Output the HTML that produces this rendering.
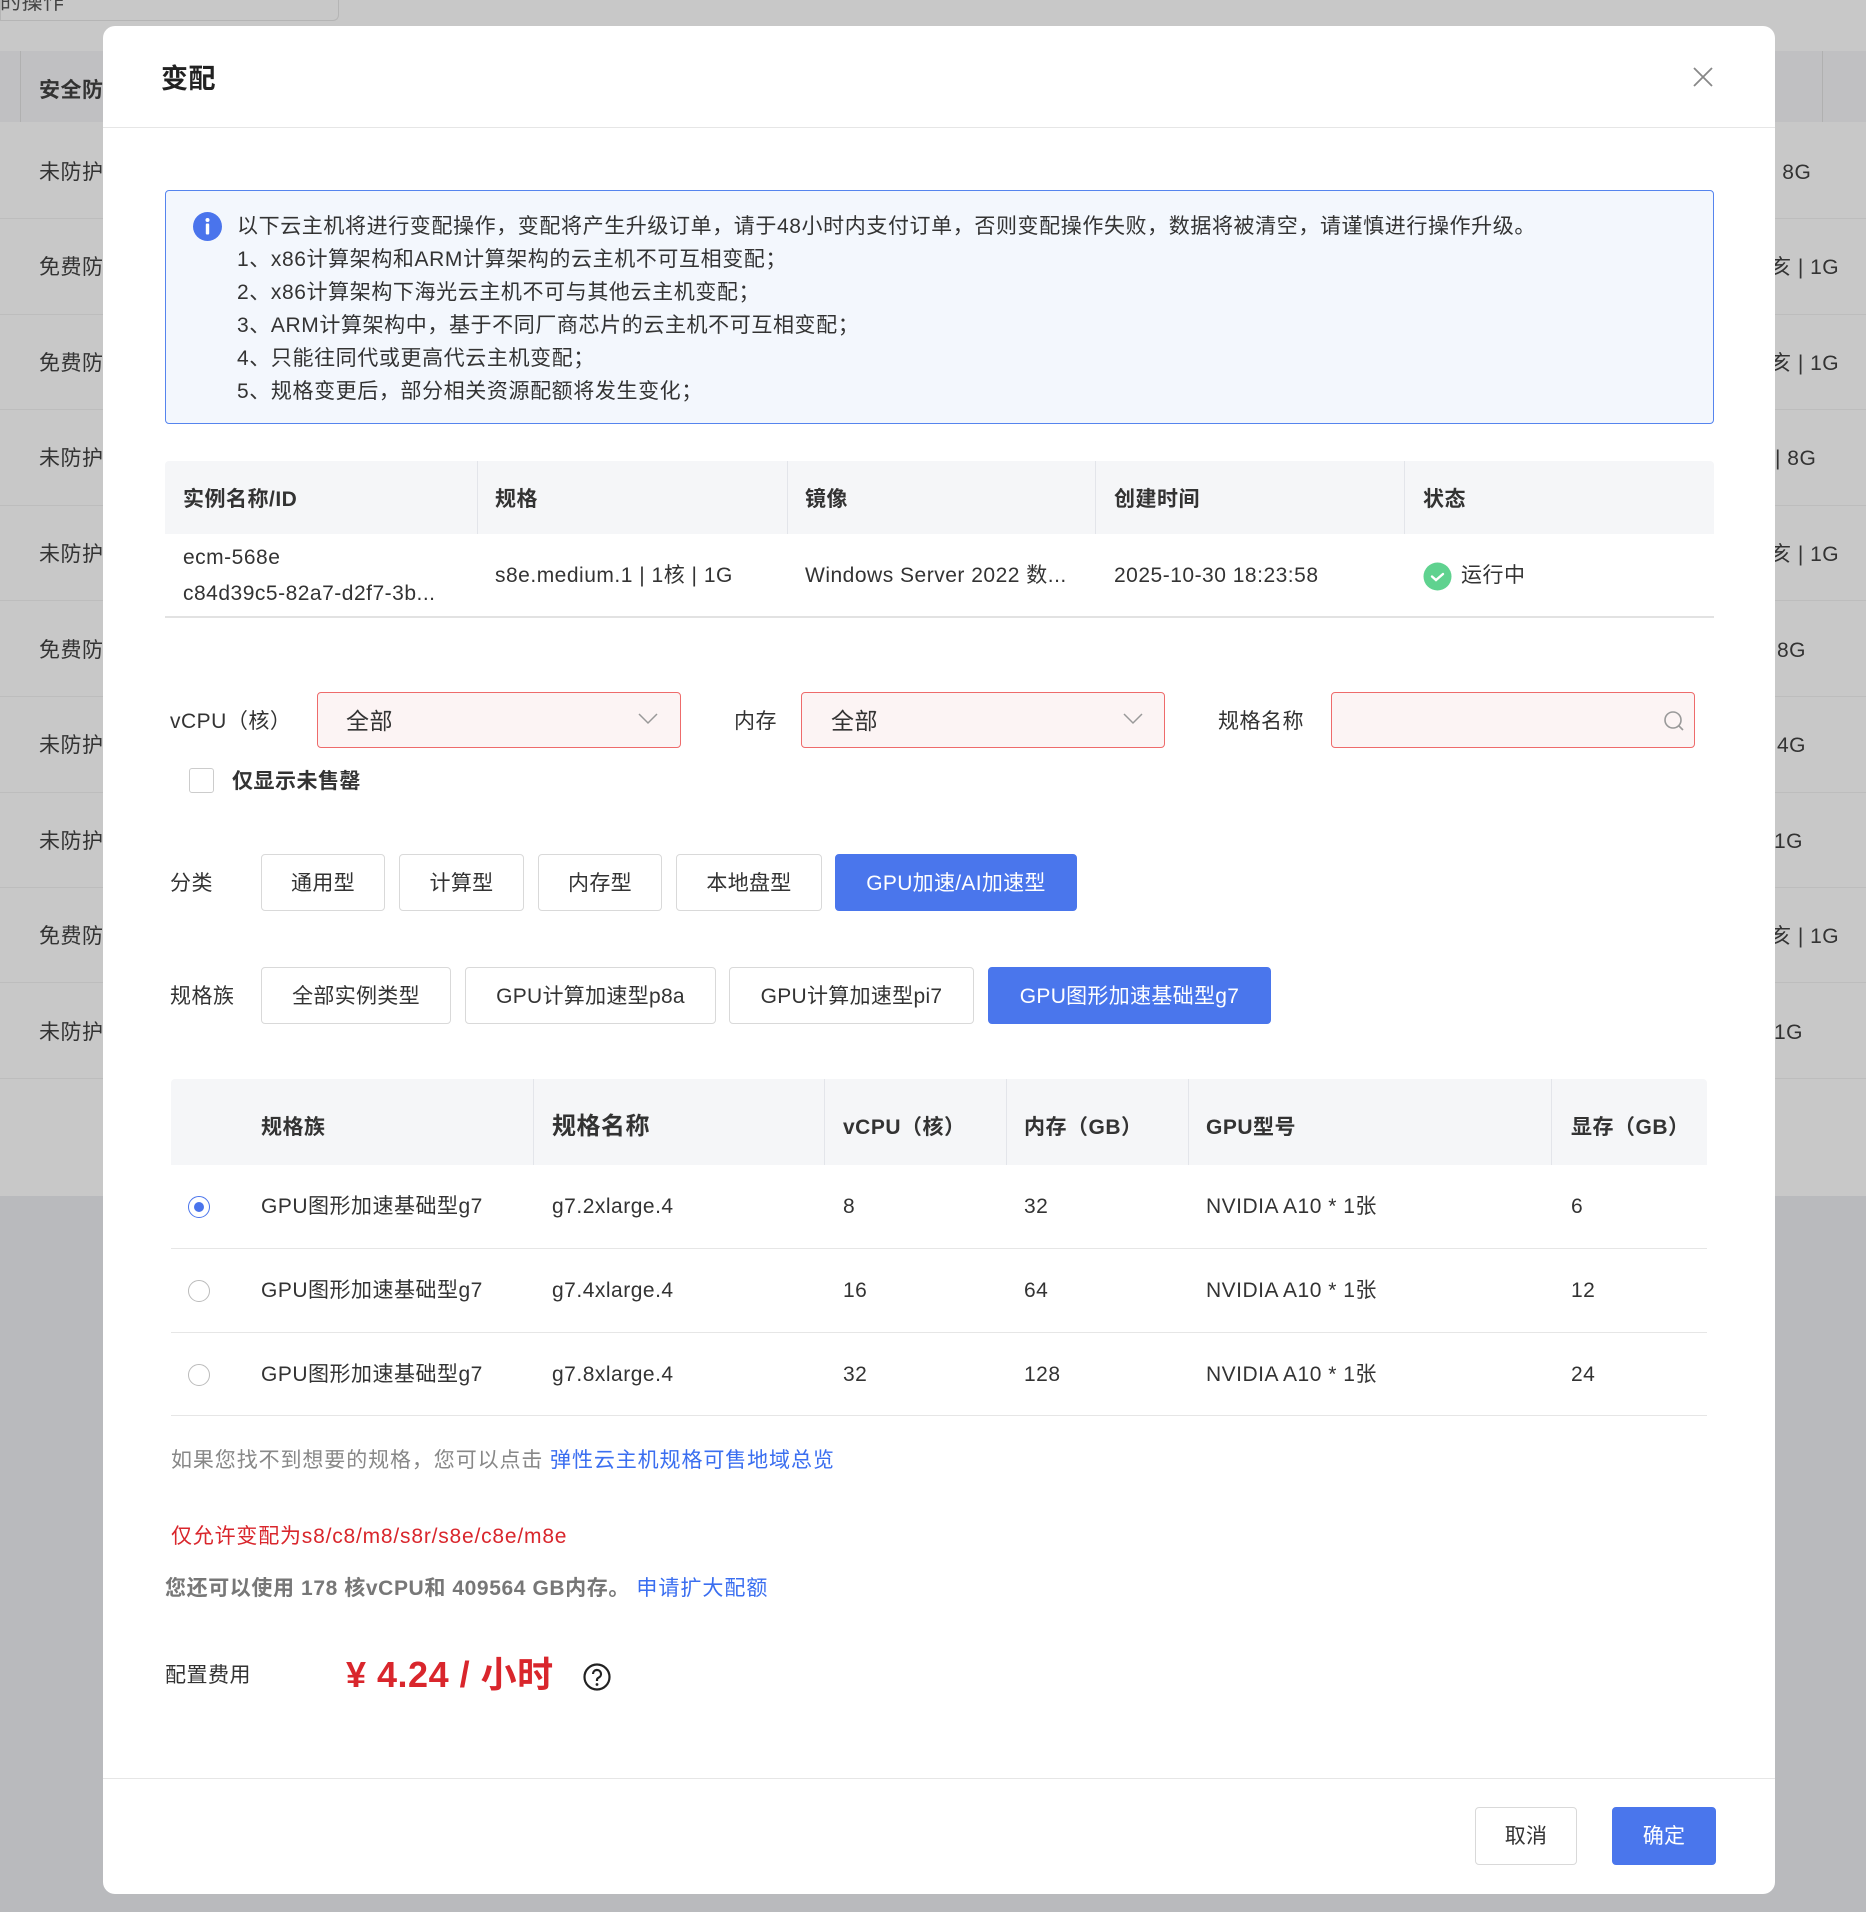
<!DOCTYPE html>
<html><head><meta charset="utf-8"><style>
*{margin:0;padding:0;box-sizing:border-box}
body{width:1866px;height:1912px;position:relative;overflow:hidden;background:#c8c8c8;font-family:"Liberation Sans","Noto Sans CJK SC",sans-serif;color:#333;font-size:21px;letter-spacing:0.5px}
.a{position:absolute;white-space:nowrap}
.c{line-height:33px;height:33px}
.bgrow{position:absolute;left:0;width:1866px;border-bottom:1px solid #bdbdbd}
.btn{position:absolute;border:1px solid #d9d9d9;border-radius:4px;background:#fff;text-align:center;color:#333;font-size:21px;letter-spacing:0.3px}
.blue{background:#4a76ec;border-color:#4a76ec;color:#fff}
.th{font-weight:bold}
.line{position:absolute;height:1px;background:#e6e6e6}
.vl{position:absolute;width:1px;background:#e3e5ea}
.radio{position:absolute;width:22px;height:22px;border:1px solid #bbb;border-radius:50%;background:#fff}
</style></head><body>
<div class="a" style="left:0;top:0;width:339px;height:21px;border:1px solid #b5b5b5;border-top:none;border-radius:0 0 6px 0"></div>
<div class="a" style="left:0;top:-14px;font-size:21px;color:#444">的操作</div>
<div class="a" style="left:0;top:51px;width:1866px;height:71px;background:#c0c0c2"></div>
<div class="a" style="left:20px;top:51px;width:1px;height:71px;background:#b0b0b0"></div>
<div class="a" style="left:1822px;top:51px;width:1px;height:71px;background:#b0b0b0"></div>
<div class="a c" style="left:39px;top:74px;font-weight:bold;color:#333">安全防</div>
<div class="a" style="left:0;top:1196px;width:1866px;height:716px;background:#b9babd"></div>
<div class="bgrow" style="top:122px;height:97px"></div>
<div class="bgrow" style="top:219px;height:96px"></div>
<div class="bgrow" style="top:315px;height:95px"></div>
<div class="bgrow" style="top:410px;height:96px"></div>
<div class="bgrow" style="top:506px;height:95px"></div>
<div class="bgrow" style="top:601px;height:96px"></div>
<div class="bgrow" style="top:697px;height:96px"></div>
<div class="bgrow" style="top:793px;height:95px"></div>
<div class="bgrow" style="top:888px;height:95px"></div>
<div class="bgrow" style="top:983px;height:96px"></div>
<div class="a c" style="left:39px;top:156px">未防护</div>
<div class="a c" style="left:39px;top:251px">免费防</div>
<div class="a c" style="left:39px;top:347px">免费防</div>
<div class="a c" style="left:39px;top:442px">未防护</div>
<div class="a c" style="left:39px;top:538px">未防护</div>
<div class="a c" style="left:39px;top:634px">免费防</div>
<div class="a c" style="left:39px;top:729px">未防护</div>
<div class="a c" style="left:39px;top:825px">未防护</div>
<div class="a c" style="left:39px;top:920px">免费防</div>
<div class="a c" style="left:39px;top:1016px">未防护</div>
<div class="a c" style="left:1770px;top:156px">| 8G</div>
<div class="a c" style="left:1770px;top:251px">亥 | 1G</div>
<div class="a c" style="left:1770px;top:347px">亥 | 1G</div>
<div class="a c" style="left:1775px;top:442px">| 8G</div>
<div class="a c" style="left:1770px;top:538px">亥 | 1G</div>
<div class="a c" style="left:1777px;top:634px">8G</div>
<div class="a c" style="left:1777px;top:729px">4G</div>
<div class="a c" style="left:1774px;top:825px">1G</div>
<div class="a c" style="left:1770px;top:920px">亥 | 1G</div>
<div class="a c" style="left:1774px;top:1016px">1G</div>

<div class="a" style="left:103px;top:26px;width:1672px;height:1868px;background:#fff;border-radius:12px"></div>
<div class="a" style="left:161px;top:61px;font-size:27px;font-weight:bold;line-height:36px;color:#222">变配</div>
<svg class="a" style="left:1692px;top:66px" width="22" height="22" viewBox="0 0 22 22"><path d="M2 2L20 20M20 2L2 20" stroke="#888" stroke-width="1.8"/></svg>
<div class="line" style="left:103px;top:127px;width:1672px"></div>

<div class="a" style="left:165px;top:190px;width:1549px;height:234px;background:#f3f7fd;border:1.5px solid #5584ee;border-radius:4px"></div>
<svg class="a" style="left:193px;top:212px" width="29" height="29" viewBox="0 0 29 29"><circle cx="14.5" cy="14.5" r="14.5" fill="#4a74ec"/><circle cx="14.5" cy="8" r="2" fill="#fff"/><rect x="12.8" y="11.5" width="3.4" height="11" rx="1" fill="#fff"/></svg>
<div class="a" style="left:237px;top:210px;line-height:33px;font-size:21px;color:#333;letter-spacing:0.6px">以下云主机将进行变配操作，变配将产生升级订单，请于48小时内支付订单，否则变配操作失败，数据将被清空，请谨慎进行操作升级。<br>1、x86计算架构和ARM计算架构的云主机不可互相变配；<br>2、x86计算架构下海光云主机不可与其他云主机变配；<br>3、ARM计算架构中，基于不同厂商芯片的云主机不可互相变配；<br>4、只能往同代或更高代云主机变配；<br>5、规格变更后，部分相关资源配额将发生变化；</div>

<div class="a" style="left:165px;top:461px;width:1549px;height:73px;background:#f5f6f8;border-radius:4px 4px 0 0"></div>
<div class="vl" style="left:477px;top:461px;height:73px"></div>
<div class="vl" style="left:787px;top:461px;height:73px"></div>
<div class="vl" style="left:1095px;top:461px;height:73px"></div>
<div class="vl" style="left:1404px;top:461px;height:73px"></div>
<div class="a c th" style="left:183px;top:483px">实例名称/ID</div>
<div class="a c th" style="left:495px;top:483px">规格</div>
<div class="a c th" style="left:805px;top:483px">镜像</div>
<div class="a c th" style="left:1114px;top:483px">创建时间</div>
<div class="a c th" style="left:1423px;top:483px">状态</div>
<div class="a c" style="left:183px;top:541px">ecm-568e</div>
<div class="a c" style="left:183px;top:577px">c84d39c5-82a7-d2f7-3b...</div>
<div class="a c" style="left:495px;top:559px">s8e.medium.1 | 1核 | 1G</div>
<div class="a c" style="left:805px;top:559px">Windows Server 2022 数...</div>
<div class="a c" style="left:1114px;top:559px">2025-10-30 18:23:58</div>
<svg class="a" style="left:1423px;top:562px" width="29" height="29" viewBox="0 0 29 29"><circle cx="14.5" cy="14.5" r="14" fill="#5fd28f"/><path d="M9 14.5l4 3.5 7-6" stroke="#fff" stroke-width="2.4" fill="none" stroke-linecap="round"/></svg>
<div class="a c" style="left:1461px;top:559px">运行中</div>
<div class="a" style="left:165px;top:616px;width:1549px;height:2px;background:#e2e2e2"></div>

<div class="a c" style="left:170px;top:705px">vCPU（核）</div>
<div class="a" style="left:317px;top:692px;width:364px;height:56px;background:#fcf4f4;border:1.5px solid #ee6b6b;border-radius:4px"></div>
<div class="a c" style="left:346px;top:705px;font-size:23px">全部</div>
<svg class="a" style="left:638px;top:713px" width="20" height="12" viewBox="0 0 20 12"><path d="M1 1l9 9 9-9" stroke="#999" stroke-width="1.5" fill="none"/></svg>
<div class="a c" style="left:734px;top:705px">内存</div>
<div class="a" style="left:801px;top:692px;width:364px;height:56px;background:#fcf4f4;border:1.5px solid #ee6b6b;border-radius:4px"></div>
<div class="a c" style="left:831px;top:705px;font-size:23px">全部</div>
<svg class="a" style="left:1123px;top:713px" width="20" height="12" viewBox="0 0 20 12"><path d="M1 1l9 9 9-9" stroke="#999" stroke-width="1.5" fill="none"/></svg>
<div class="a c" style="left:1218px;top:705px">规格名称</div>
<div class="a" style="left:1331px;top:692px;width:364px;height:56px;background:#fcf4f4;border:1.5px solid #ee6b6b;border-radius:4px"></div>
<svg class="a" style="left:1662px;top:709px" width="24" height="24" viewBox="0 0 24 24"><circle cx="11" cy="11" r="8" stroke="#999" stroke-width="1.6" fill="none"/><path d="M17 17l4 4" stroke="#999" stroke-width="1.6"/></svg>
<div class="a" style="left:189px;top:768px;width:25px;height:25px;border:1.5px solid #ccc;border-radius:3px;background:#fff"></div>
<div class="a c" style="left:232px;top:765px;font-weight:bold;color:#333">仅显示未售罄</div>

<div class="a c" style="left:170px;top:867px">分类</div>
<div class="btn" style="left:261px;top:854px;width:124px;height:57px;line-height:57px">通用型</div>
<div class="btn" style="left:399px;top:854px;width:125px;height:57px;line-height:57px">计算型</div>
<div class="btn" style="left:538px;top:854px;width:124px;height:57px;line-height:57px">内存型</div>
<div class="btn" style="left:676px;top:854px;width:146px;height:57px;line-height:57px">本地盘型</div>
<div class="btn blue" style="left:835px;top:854px;width:242px;height:57px;line-height:57px">GPU加速/AI加速型</div>

<div class="a c" style="left:170px;top:980px">规格族</div>
<div class="btn" style="left:261px;top:967px;width:190px;height:57px;line-height:57px">全部实例类型</div>
<div class="btn" style="left:465px;top:967px;width:251px;height:57px;line-height:57px">GPU计算加速型p8a</div>
<div class="btn" style="left:729px;top:967px;width:245px;height:57px;line-height:57px">GPU计算加速型pi7</div>
<div class="btn blue" style="left:988px;top:967px;width:283px;height:57px;line-height:57px">GPU图形加速基础型g7</div>

<div class="a" style="left:171px;top:1079px;width:1536px;height:86px;background:#f5f6f8;border-radius:4px 4px 0 0"></div>
<div class="vl" style="left:533px;top:1079px;height:86px"></div>
<div class="vl" style="left:824px;top:1079px;height:86px"></div>
<div class="vl" style="left:1006px;top:1079px;height:86px"></div>
<div class="vl" style="left:1188px;top:1079px;height:86px"></div>
<div class="vl" style="left:1551px;top:1079px;height:86px"></div>
<div class="a c th" style="left:261px;top:1111px">规格族</div>
<div class="a th" style="left:552px;top:1109px;font-size:24px;line-height:36px">规格名称</div>
<div class="a c th" style="left:843px;top:1111px">vCPU（核）</div>
<div class="a c th" style="left:1024px;top:1111px">内存（GB）</div>
<div class="a c th" style="left:1206px;top:1111px">GPU型号</div>
<div class="a c th" style="left:1571px;top:1111px">显存（GB）</div>

<div class="radio" style="left:188px;top:1196px;border-color:#4a74ec"></div>
<div class="a" style="left:194px;top:1202px;width:10px;height:10px;border-radius:50%;background:#4a74ec"></div>
<div class="a c" style="left:261px;top:1190px">GPU图形加速基础型g7</div>
<div class="a c" style="left:552px;top:1190px">g7.2xlarge.4</div>
<div class="a c" style="left:843px;top:1190px">8</div>
<div class="a c" style="left:1024px;top:1190px">32</div>
<div class="a c" style="left:1206px;top:1190px">NVIDIA A10 * 1张</div>
<div class="a c" style="left:1571px;top:1190px">6</div>
<div class="line" style="left:171px;top:1248px;width:1536px"></div>

<div class="radio" style="left:188px;top:1280px"></div>
<div class="a c" style="left:261px;top:1274px">GPU图形加速基础型g7</div>
<div class="a c" style="left:552px;top:1274px">g7.4xlarge.4</div>
<div class="a c" style="left:843px;top:1274px">16</div>
<div class="a c" style="left:1024px;top:1274px">64</div>
<div class="a c" style="left:1206px;top:1274px">NVIDIA A10 * 1张</div>
<div class="a c" style="left:1571px;top:1274px">12</div>
<div class="line" style="left:171px;top:1332px;width:1536px"></div>

<div class="radio" style="left:188px;top:1364px"></div>
<div class="a c" style="left:261px;top:1358px">GPU图形加速基础型g7</div>
<div class="a c" style="left:552px;top:1358px">g7.8xlarge.4</div>
<div class="a c" style="left:843px;top:1358px">32</div>
<div class="a c" style="left:1024px;top:1358px">128</div>
<div class="a c" style="left:1206px;top:1358px">NVIDIA A10 * 1张</div>
<div class="a c" style="left:1571px;top:1358px">24</div>
<div class="line" style="left:171px;top:1415px;width:1536px"></div>

<div class="a c" style="left:171px;top:1444px;color:#888;letter-spacing:0.9px">如果您找不到想要的规格，您可以点击 <span style="color:#3a6ef0">弹性云主机规格可售地域总览</span></div>
<div class="a c" style="left:171px;top:1520px;color:#d9262c;letter-spacing:0.8px">仅允许变配为s8/c8/m8/s8r/s8e/c8e/m8e</div>
<div class="a c" style="left:165px;top:1572px;color:#777;font-weight:bold;letter-spacing:0.6px">您还可以使用 178 核vCPU和 409564 GB内存。 <span style="color:#3a6ef0;font-weight:normal;letter-spacing:1px">申请扩大配额</span></div>
<div class="a c" style="left:165px;top:1659px">配置费用</div>
<div class="a" style="left:346px;top:1652px;font-size:36px;font-weight:bold;line-height:46px;color:#d9262c">¥ 4.24 / 小时</div>
<svg class="a" style="left:583px;top:1663px" width="28" height="28" viewBox="0 0 28 28"><circle cx="14" cy="14" r="12.5" stroke="#222" stroke-width="2.2" fill="none"/><path d="M10 11a4 4 0 1 1 5.5 3.7c-1 .5-1.5 1.2-1.5 2.3v1" stroke="#222" stroke-width="2.2" fill="none"/><circle cx="14" cy="21.5" r="1.4" fill="#222"/></svg>

<div class="line" style="left:103px;top:1778px;width:1672px"></div>
<div class="btn" style="left:1475px;top:1807px;width:102px;height:58px;line-height:58px">取消</div>
<div class="btn blue" style="left:1612px;top:1807px;width:104px;height:58px;line-height:58px">确定</div>
</body></html>
